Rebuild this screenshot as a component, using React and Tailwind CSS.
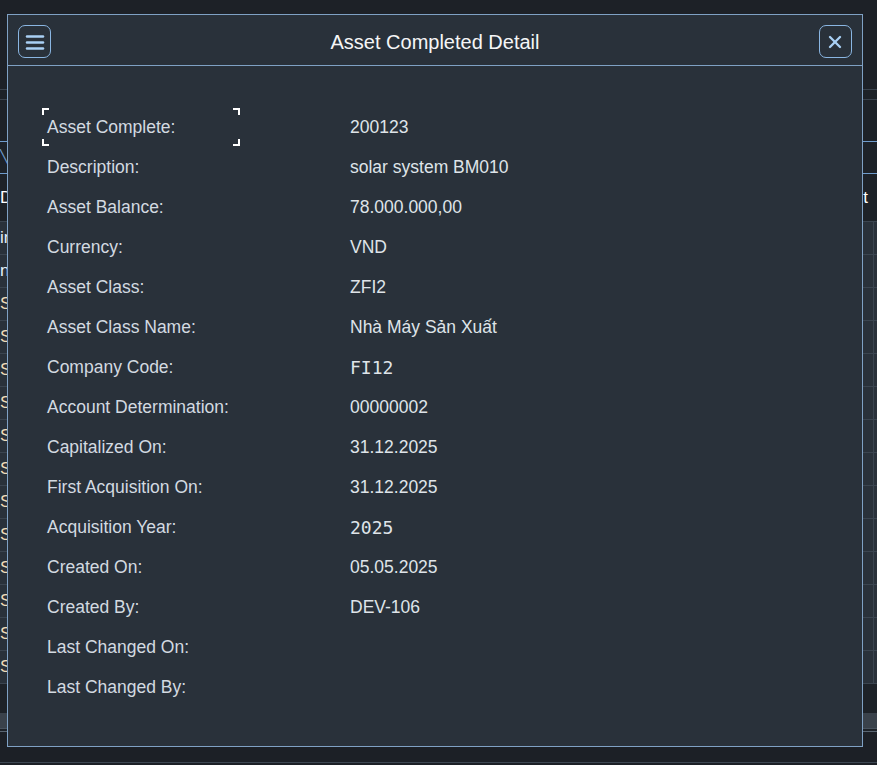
import { X } from 'lucide-react'

const fields = [
  { label: 'Asset Complete:', value: '200123' },
  { label: 'Description:', value: 'solar system BM010' },
  { label: 'Asset Balance:', value: '78.000.000,00' },
  { label: 'Currency:', value: 'VND' },
  { label: 'Asset Class:', value: 'ZFI2' },
  { label: 'Asset Class Name:', value: 'Nhà Máy Sản Xuất' },
  { label: 'Company Code:', value: 'FI12', mono: true },
  { label: 'Account Determination:', value: '00000002' },
  { label: 'Capitalized On:', value: '31.12.2025' },
  { label: 'First Acquisition On:', value: '31.12.2025' },
  { label: 'Acquisition Year:', value: '2025', mono: true },
  { label: 'Created On:', value: '05.05.2025' },
  { label: 'Created By:', value: 'DEV-106' },
  { label: 'Last Changed On:', value: '' },
  { label: 'Last Changed By:', value: '' }
]

const rowTexts = ['in', 'ni', 'SM', 'SM', 'SM', 'SM', 'SM', 'SM', 'SM', 'SM', 'SM', 'SM', 'SM', 'SM']

function Corner({ className }) {
  return <span className={`absolute w-[7px] h-[7px] border-white ${className}`} />
}

function Backdrop() {
  return (
    <div className="flex flex-col h-full">
      {/* shell / toolbar */}
      <div className="h-[90px] bg-[#1d2127] border-b border-[#3a434d]" />
      <div className="h-[10px] bg-[#1d2228] border-b border-[#3a434d]" />
      <div className="h-[41px] bg-[#1d2228]" />
      <div className="h-[33px] flex border-y border-[#6f9ccc] bg-[#1d2228]">
        <div className="w-[7px] text-[#6f9ccc] text-[14px] leading-[30px]">╲</div>
      </div>

      {/* table */}
      <div className="h-[48px] flex justify-between items-center bg-[#1d2228] border-b border-[#3b4550] text-[17px] text-white">
        <span>D</span>
        <span className="mr-[9px]">t</span>
      </div>
      {rowTexts.map((t, i) => (
        <div
          key={i}
          className="h-[33px] flex justify-between items-center bg-[#29313a] border-b border-[#3b4550] text-[17px]"
        >
          <span className={i < 2 ? 'text-[#e4eef8]' : 'text-[#efdcb8]'}>{t}</span>
          <span className="flex h-full">
            <span className="w-[2px] h-[6px] self-center bg-[#c06a4a] mr-[10px]" />
            <span className="w-px h-full bg-[#3b4550] mr-[3px]" />
          </span>
        </div>
      ))}
      <div className="h-[29px] bg-[#1d2228]" />
      <div className="h-[16px] bg-[#3a424b] border-b border-[#4a545f]" />
      <div className="h-[3px] bg-[#1d2228] border-b border-[#5a6672]" />
      <div className="h-[31px] bg-[#1c2026] border-b border-[#3d4752]" />
      <div className="flex-1 bg-[#1c2026]" />
    </div>
  )
}

export default function App() {
  return (
    <div className="relative w-[877px] h-[765px] overflow-hidden bg-[#1c2026] font-['Liberation_Sans',sans-serif]">
      <Backdrop />

      {/* Dialog */}
      <div className="absolute left-[7px] top-[14px] w-[856px] h-[733px] flex flex-col bg-[#29313a] border border-[#7fa1c4]">
        <div className="h-[51px] flex items-start justify-between px-[10px] pt-[10px] border-b border-[#7fa1c4]">
          <button className="w-[33px] h-[33px] rounded-[7px] border border-[#8ab6e2] flex items-center justify-center">
            <svg width="20" height="16" viewBox="0 0 20 16">
              <g stroke="#a9d0f5" strokeWidth="2.5" strokeLinecap="round">
                <line x1="2" y1="2.5" x2="18" y2="2.5" />
                <line x1="2" y1="8.5" x2="18" y2="8.5" />
                <line x1="2" y1="14.5" x2="18" y2="14.5" />
              </g>
            </svg>
          </button>
          <h1 className="mt-[4px] text-[20px] leading-[26px] text-[#f5f6f7]">Asset Completed Detail</h1>
          <button className="w-[33px] h-[33px] rounded-[7px] border border-[#8ab6e2] flex items-center justify-center">
            <X className="w-[20px] h-[20px] text-[#a9d0f5]" strokeWidth={2.8} />
          </button>
        </div>

        <div className="pt-[41px] pl-[34px] flex flex-col">
          {fields.map((f, i) => (
            <div key={f.label} className="h-10 grid grid-cols-[308px_1fr] items-center">
              <div className="relative w-[198px] h-[37px] pl-[5px] flex items-center text-[17.5px] text-[#d3dae1]">
                {i === 0 && (
                  <>
                    <Corner className="left-0 -top-px border-l-2 border-t-2" />
                    <Corner className="right-0 -top-px border-r-2 border-t-2" />
                    <Corner className="left-0 bottom-0 border-l-2 border-b-2" />
                    <Corner className="right-0 bottom-0 border-r-2 border-b-2" />
                  </>
                )}
                {f.label}
              </div>
              <div
                className={
                  f.mono
                    ? "font-['DejaVu_Sans_Mono',monospace] text-[18px] text-[#dfe4e9]"
                    : 'text-[17.5px] text-[#dfe4e9]'
                }
              >
                {f.value}
              </div>
            </div>
          ))}
        </div>
      </div>
    </div>
  )
}
